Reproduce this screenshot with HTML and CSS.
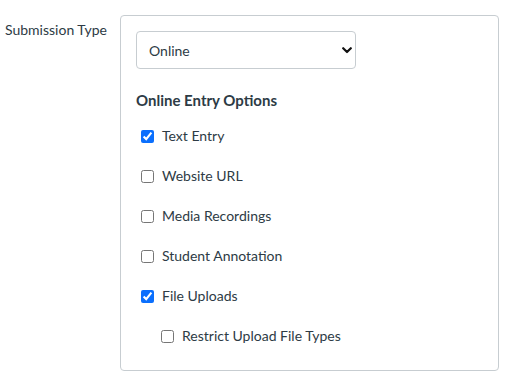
FILE: index.html
```html
<!DOCTYPE html>
<html lang="en">
<head>
    <meta charset="UTF-8">
    <title>Submission Type</title>
    <link rel="stylesheet" href="styles.css">
</head>
<body>
    <div class="field">
        <div class="field-label">Submission Type</div>
        <div class="field-box">
            <div class="select-wrap">
                <select class="type-select">
                    <option>Online</option>
                    <option>No Submission</option>
                    <option>On Paper</option>
                    <option>External Tool</option>
                </select>
                <svg class="select-arrow" width="10" height="7" viewBox="0 0 10 7">
                    <path d="M1.2 1.2 L5 5 L8.8 1.2" fill="none" stroke="#111" stroke-width="2.2" stroke-linecap="round" stroke-linejoin="round"/>
                </svg>
            </div>

            <div class="options-title">Online Entry Options</div>

            <label class="option"><input type="checkbox" checked> Text Entry</label>
            <label class="option"><input type="checkbox"> Website URL</label>
            <label class="option"><input type="checkbox"> Media Recordings</label>
            <label class="option"><input type="checkbox"> Student Annotation</label>
            <label class="option"><input type="checkbox" checked> File Uploads</label>
            <label class="option nested"><input type="checkbox"> Restrict Upload File Types</label>
        </div>
    </div>
</body>
</html>
```

FILE: styles.css
```css
* {
    margin: 0;
    padding: 0;
    box-sizing: border-box;
}

body {
    font-family: Lato, 'Liberation Sans', sans-serif;
    font-size: 14px;
    line-height: 20px;
    color: #2d3b45;
    background-color: #fff;
}

.field {
    display: flex;
    padding-top: 15px;
}

.field-label {
    width: 120px;
    padding-left: 5px;
    padding-top: 5px;
}

.field-box {
    width: 379px;
    height: 356px;
    border: 1px solid #c7cdd1;
    border-radius: 4px;
    padding: 15px;
}

.select-wrap {
    position: relative;
    width: 220px;
}

.type-select {
    appearance: none;
    -webkit-appearance: none;
    width: 220px;
    height: 38px;
    border: 1px solid #c7cdd1;
    border-radius: 4px;
    background: #fff;
    padding: 0 12px;
    font-family: inherit;
    font-size: 14px;
    color: #2d3b45;
}

.select-arrow {
    position: absolute;
    right: 4px;
    top: 16px;
}

.options-title {
    font-weight: bold;
    font-size: 15px;
    margin-top: 21px;
    margin-bottom: 6px;
}

.option {
    display: flex;
    align-items: center;
    gap: 8px;
    height: 40px;
    padding-left: 5px;
}

.option input {
    margin: 0;
    width: 13px;
    height: 13px;
    accent-color: #0b6ffd;
}

.option.nested {
    padding-left: 25px;
}
```
